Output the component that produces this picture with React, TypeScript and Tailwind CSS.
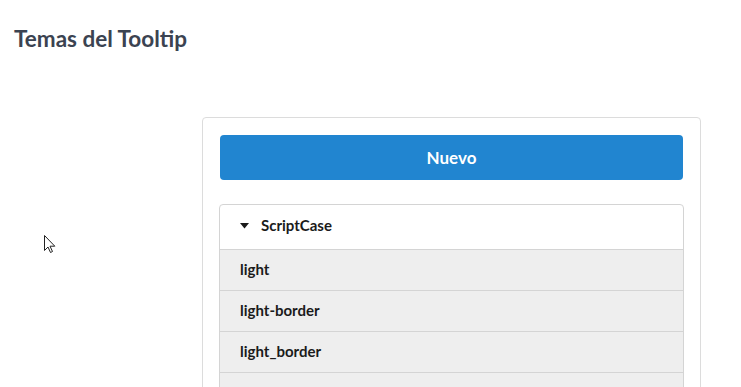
import React from "react";

const items = ["light", "light-border", "light_border"];

export default function App() {
  return (
    <div className="relative w-[741px] h-[387px] overflow-hidden bg-white" style={{ fontFamily: "Lato, 'Noto Sans', sans-serif" }}>
      <div className="px-[14px] pt-[26px]">
        <h2 className="text-[22.5px] leading-[26px] font-bold text-[#3b4351]">Temas del Tooltip</h2>
        <div className="flex mt-[65px]">
          <div className="w-[188px] shrink-0" />
          <div className="w-[499px] border border-[#dcdcdc] rounded-[4px] px-[17px] pt-[17px] pb-4">
            <button className="w-full h-[45px] rounded-[4px] bg-[#2185d0] text-white text-[17px] font-bold">Nuevo</button>
            <div className="-mx-px mt-[24px] border border-[#d4d4d4] rounded-[4px]">
              <div className="h-[44px] flex items-center pl-[20px] pb-[3px] text-[15px] font-bold text-[#1b1b1b]">
                <svg width="9" height="6" viewBox="0 0 9 6" className="mr-[12px]">
                  <path d="M0 0 L9 0 L4.5 5.5 Z" fill="#1b1b1b" />
                </svg>
                ScriptCase
              </div>
              {items.map((t) => (
                <div key={t} className="h-[41px] border-t border-[#d4d4d4] bg-[#eeeeee] flex items-center pl-[20px] pb-[1px] text-[15px] font-bold text-[#1b1b1b]">
                  {t}
                </div>
              ))}
              <div className="h-[41px] border-t border-[#d4d4d4] bg-[#eeeeee]" />
            </div>
          </div>
        </div>
      </div>
      <svg className="absolute left-[44px] top-[235px]" width="12" height="19" viewBox="0 0 12 19">
        <path d="M0.5 0.5 L0.5 15.5 L4 12 L6.5 17.5 L8.5 16.5 L6 11.2 L10.8 11.2 Z" fill="white" stroke="#222" strokeWidth="1" strokeLinejoin="round" />
      </svg>
    </div>
  );
}
